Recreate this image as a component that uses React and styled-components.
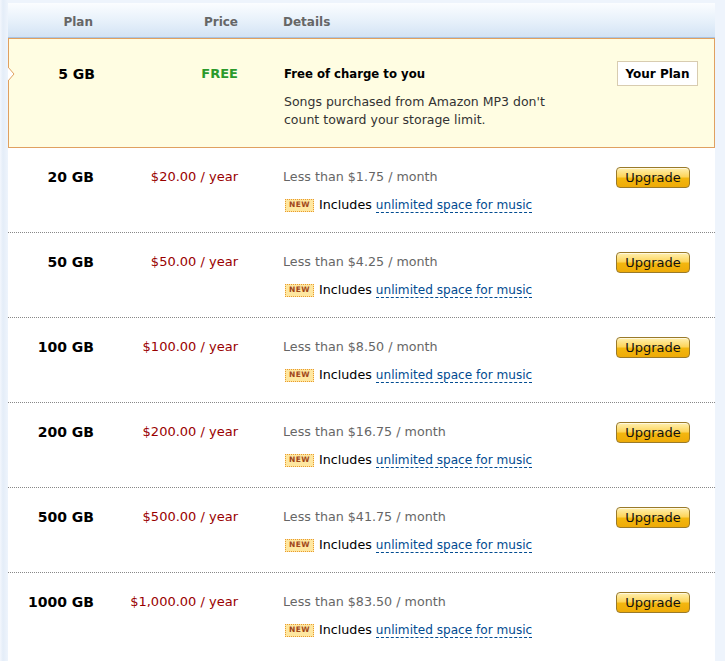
import React from "react";
import styled, { createGlobalStyle } from "styled-components";

const Global = createGlobalStyle`
  html, body { margin: 0; padding: 0; }
  body {
    background: #e9f1fb;
    font-family: "DejaVu Sans", Verdana, sans-serif;
    color: #000;
  }
`;

const Frame = styled.div`
  width: 725px;
  height: 661px;
  overflow: hidden;
  box-sizing: border-box;
  padding: 3px 10px 0 8px;
  background: linear-gradient(to right, #f3f7fd 0, #e4edf8 3px, #eef4fc 8px);
`;

const Panel = styled.div`
  background: #fff;
  min-height: 700px;
`;

const Header = styled.div`
  display: grid;
  grid-template-columns: 86px 144px 378px 1fr;
  height: 35px;
  box-sizing: border-box;
  padding-top: 3px;
  align-items: center;
  background: linear-gradient(to bottom, #fbfdff 0%, #e6f0fa 55%, #d3e3f4 100%);
  border-bottom: 1px solid #a9c4e2;
  font-size: 12px;
  font-weight: bold;
  color: #666;
`;

const HCell = styled.div`
  text-align: ${(p) => (p.$right ? "right" : "left")};
  padding-left: ${(p) => (p.$pad ? "45px" : "0")};
  padding-right: ${(p) => (p.$padr ? p.$padr : "0")};
`;

const Current = styled.div`
  position: relative;
  display: grid;
  grid-template-columns: 86px 144px 378px 1fr;
  background: #fffde2;
  border: 1px solid #e0a060;
  padding: 26px 0 18px;
`;

const Notch = styled.svg`
  position: absolute;
  left: -1px;
  top: 28px;
`;

const PlanCell = styled.div`
  text-align: right;
  font-size: 14px;
  font-weight: bold;
  line-height: 18px;
  color: #000;
`;

const PriceCell = styled.div`
  text-align: right;
  font-size: 13px;
  line-height: 18px;
  padding-right: ${(p) => (p.$free ? "1px" : "0")};
  color: ${(p) => (p.$free ? "#2b9a2b" : "#990000")};
  font-weight: ${(p) => (p.$free ? "bold" : "normal")};
`;

const DetailCell = styled.div`
  padding-left: 45px;
  display: flex;
  flex-direction: column;
  gap: 10px;
`;

const Line = styled.div`
  font-size: ${(p) => (p.$bold ? "11.7px" : "12.7px")};
  font-weight: ${(p) => (p.$bold ? "bold" : "normal")};
  line-height: 18px;
  height: 18px;
  color: ${(p) => p.$color || "#000"};
  display: flex;
  align-items: center;
  white-space: nowrap;
`;

const Para = styled.div`
  font-size: 12.5px;
  line-height: 18px;
  color: #333;
`;

const ActionCell = styled.div`
  margin-top: ${(p) => p.$top || "0"};
`;

const YourPlan = styled.div`
  margin-top: -4px;
  width: 79px;
  height: 23px;
  box-sizing: content-box;
  border: 1px solid #d8ccb0;
  background: #fff;
  font-size: 12px;
  font-weight: bold;
  display: flex;
  align-items: center;
  justify-content: center;
`;

const Row = styled.div`
  display: grid;
  grid-template-columns: 86px 144px 378px 1fr;
  padding: 20px 0 18px;
  border-bottom: ${(p) => (p.$last ? "none" : "1px dotted #888")};
`;

const Button = styled.button`
  width: 74px;
  height: 21px;
  padding: 0;
  border: 1px solid #9a7a2a;
  border-radius: 4px;
  background: linear-gradient(to bottom, #fff0b0 0%, #fdd55c 45%, #f3b60e 55%, #eeab08 100%);
  box-shadow: inset 0 1px 0 rgba(255, 255, 255, 0.6);
  font-family: "DejaVu Sans", Verdana, sans-serif;
  font-size: 13px;
  color: #111;
  line-height: 19px;
  cursor: pointer;
`;

const Badge = styled.span`
  display: inline-flex;
  align-items: center;
  justify-content: center;
  width: 27px;
  height: 11px;
  margin: 0 5px 0 2px;
  background: #fee7a0;
  border: 1px dotted #e89a30;
  font-size: 7.5px;
  font-weight: bold;
  letter-spacing: 0.5px;
  color: #a0461a;
`;

const Link = styled.a`
  color: #004b91;
  text-decoration: none;
  border-bottom: 1px dashed #004b91;
  line-height: 14px;
  margin-left: 4px;
  font-size: 12.1px;
  cursor: pointer;
`;

const plans = [
  { size: "20 GB", price: "$20.00 / year", month: "$1.75" },
  { size: "50 GB", price: "$50.00 / year", month: "$4.25" },
  { size: "100 GB", price: "$100.00 / year", month: "$8.50" },
  { size: "200 GB", price: "$200.00 / year", month: "$16.75" },
  { size: "500 GB", price: "$500.00 / year", month: "$41.75" },
  { size: "1000 GB", price: "$1,000.00 / year", month: "$83.50" },
];

export default function App() {
  return (
    <>
      <Global />
      <Frame>
        <Panel>
          <Header>
            <HCell $right $padr="1px">Plan</HCell>
            <HCell $right>Price</HCell>
            <HCell $pad>Details</HCell>
            <HCell />
          </Header>
          <Current>
            <Notch width="7" height="14" viewBox="0 0 7 14">
              <path d="M0 0 L6 7 L0 14" fill="#fff" stroke="#e0a060" strokeWidth="1" />
            </Notch>
            <PlanCell>5 GB</PlanCell>
            <PriceCell $free>FREE</PriceCell>
            <DetailCell>
              <Line $bold>Free of charge to you</Line>
              <Para>
                Songs purchased from Amazon MP3 don't
                <br />
                count toward your storage limit.
              </Para>
            </DetailCell>
            <ActionCell>
              <YourPlan>Your Plan</YourPlan>
            </ActionCell>
          </Current>
          {plans.map((p, i) => (
            <Row key={p.size} $last={i === plans.length - 1}>
              <PlanCell>{p.size}</PlanCell>
              <PriceCell>{p.price}</PriceCell>
              <DetailCell>
                <Line $color="#666">Less than {p.month} / month</Line>
                <Line>
                  <Badge>NEW</Badge>
                  Includes
                  <Link>unlimited space for music</Link>
                </Line>
              </DetailCell>
              <ActionCell $top="-1px">
                <Button>Upgrade</Button>
              </ActionCell>
            </Row>
          ))}
        </Panel>
      </Frame>
    </>
  );
}
